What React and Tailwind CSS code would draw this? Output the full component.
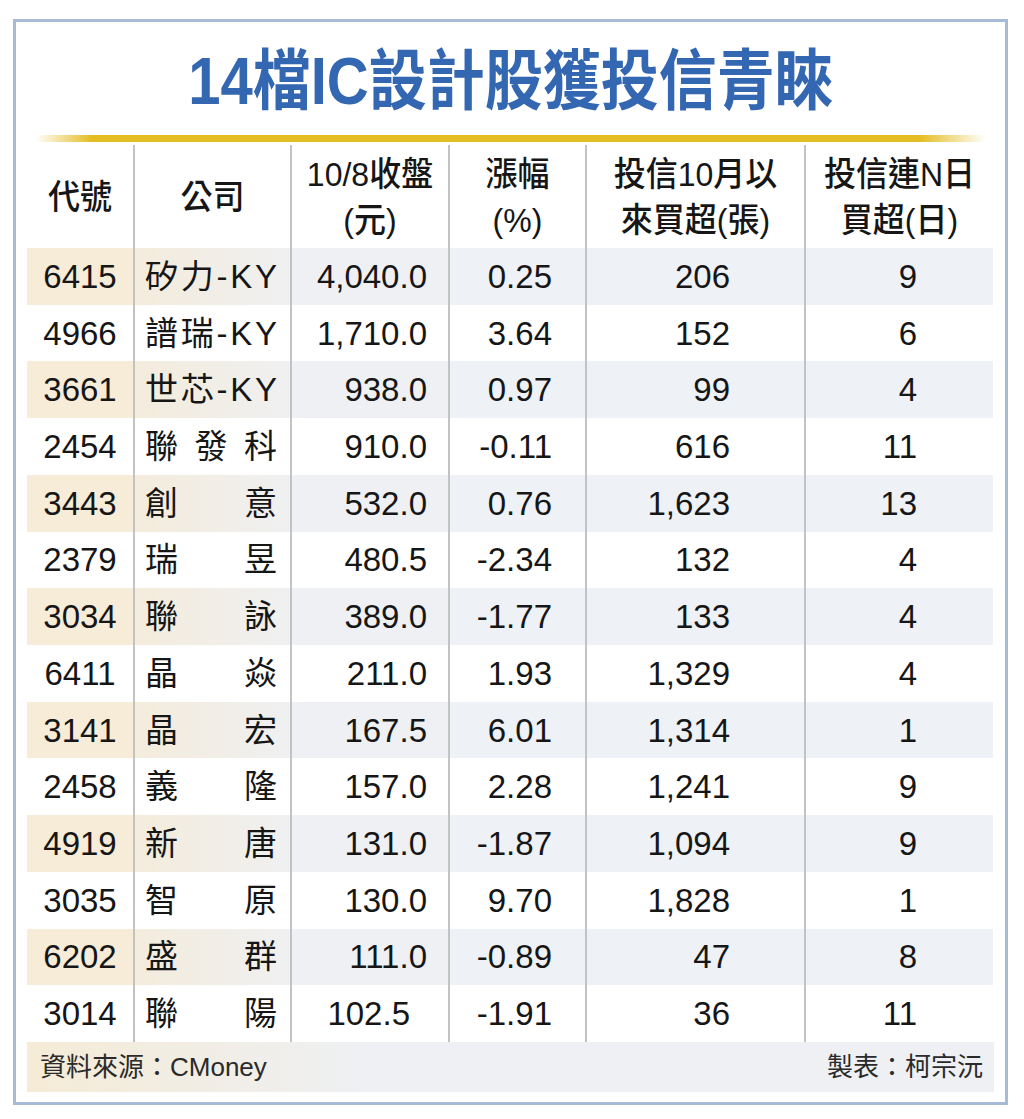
import React from 'react';

// 14檔IC設計股獲投信青睞 — 報表圖卡
const rows = [
    { code: '6415', name: '矽力-KY', close: '4,040.0', chg: '0.25', buy: '206', days: '9' },
    { code: '4966', name: '譜瑞-KY', close: '1,710.0', chg: '3.64', buy: '152', days: '6' },
    { code: '3661', name: '世芯-KY', close: '938.0', chg: '0.97', buy: '99', days: '4' },
    { code: '2454', name: '聯發科', close: '910.0', chg: '-0.11', buy: '616', days: '11' },
    { code: '3443', name: '創意', close: '532.0', chg: '0.76', buy: '1,623', days: '13' },
    { code: '2379', name: '瑞昱', close: '480.5', chg: '-2.34', buy: '132', days: '4' },
    { code: '3034', name: '聯詠', close: '389.0', chg: '-1.77', buy: '133', days: '4' },
    { code: '6411', name: '晶焱', close: '211.0', chg: '1.93', buy: '1,329', days: '4' },
    { code: '3141', name: '晶宏', close: '167.5', chg: '6.01', buy: '1,314', days: '1' },
    { code: '2458', name: '義隆', close: '157.0', chg: '2.28', buy: '1,241', days: '9' },
    { code: '4919', name: '新唐', close: '131.0', chg: '-1.87', buy: '1,094', days: '9' },
    { code: '3035', name: '智原', close: '130.0', chg: '9.70', buy: '1,828', days: '1' },
    { code: '6202', name: '盛群', close: '111.0', chg: '-0.89', buy: '47', days: '8' },
    { code: '3014', name: '聯陽', close: '102.5', chg: '-1.91', buy: '36', days: '11', offset: true },
];

const cols = 'grid grid-cols-[106px_157px_158px_137px_219px_189px]';
const divider = 'border-l-2 border-[#c3c3c3]';

function HeaderCell({ lines, first }) {
    return (
        <div className={`flex flex-col items-center justify-center text-[32px] leading-[46px] font-medium ${first ? '' : divider}`}>
            {lines.map(l => <span key={l} className="scale-y-[1.06]">{l}</span>)}
        </div>
    );
}

function Row({ r, shaded }) {
    return (
        <div className={`${cols} h-[56.72px] text-[33px] leading-none`}>
            <div className={`flex items-center justify-center ${shaded ? 'bg-[#f6ecd8]' : ''}`}>{r.code}</div>
            <div className={`${divider} flex items-center justify-between pl-[10px] pr-[13px] ${shaded ? 'bg-[linear-gradient(to_right,#f4ecdc,#eff0f1)]' : ''}`}>
                {[...r.name].map((c, i) => <span key={i}>{c}</span>)}
            </div>
            <div className={`${divider} flex items-center justify-end ${r.offset ? 'pr-[38px]' : 'pr-[21px]'} ${shaded ? 'bg-[#eef0f3]' : ''}`}>{r.close}</div>
            <div className={`${divider} flex items-center justify-end pr-[33px] ${shaded ? 'bg-[#eef1f5]' : ''}`}>{r.chg}</div>
            <div className={`${divider} flex items-center justify-end pr-[74px] ${shaded ? 'bg-[#eef1f5]' : ''}`}>{r.buy}</div>
            <div className={`${divider} flex items-center justify-end pr-[76px] ${shaded ? 'bg-[#eef1f5]' : ''}`}>{r.days}</div>
        </div>
    );
}

export default function App() {
    return (
        <div className="bg-white w-[1024px] h-[1119px] pl-[13px] pt-[19px] font-['Liberation_Sans','Noto_Sans_CJK_TC',sans-serif] text-[#161616]">
            <div className="w-[995px] h-[1086px] border-[3px] border-[#a7bad8] flex flex-col px-[11px]">
                <div className="h-[113px] flex items-center justify-center pt-[4px]">
                    <h1 className="text-[58px] font-bold text-[#3467b1] leading-none scale-y-[1.14]">14檔IC設計股獲投信青睞</h1>
                </div>
                <div className="h-[7px] mx-[8px] bg-[linear-gradient(to_right,rgba(228,189,34,0),#e4bd22_6%,#e4bd22_93%,rgba(228,189,34,0))]" />
                <div className="h-[3px]" />
                <div className={`${cols} h-[103px]`}>
                    <HeaderCell first lines={['代號']} />
                    <HeaderCell lines={['公司']} />
                    <HeaderCell lines={['10/8收盤', '(元)']} />
                    <HeaderCell lines={['漲幅', '(%)']} />
                    <HeaderCell lines={['投信10月以', '來買超(張)']} />
                    <HeaderCell lines={['投信連N日', '買超(日)']} />
                </div>
                {rows.map((r, i) => <Row key={r.code} r={r} shaded={i % 2 === 0} />)}
                <div className="h-[50px] flex items-center justify-between pl-[13px] pr-[11px] text-[26px] text-[#2a2a2a] bg-[linear-gradient(to_right,#f5ebd6,#eef0f3_35%,#eef0f3)]">
                    <span>資料來源：CMoney</span>
                    <span>製表：柯宗沅</span>
                </div>
            </div>
        </div>
    );
}
